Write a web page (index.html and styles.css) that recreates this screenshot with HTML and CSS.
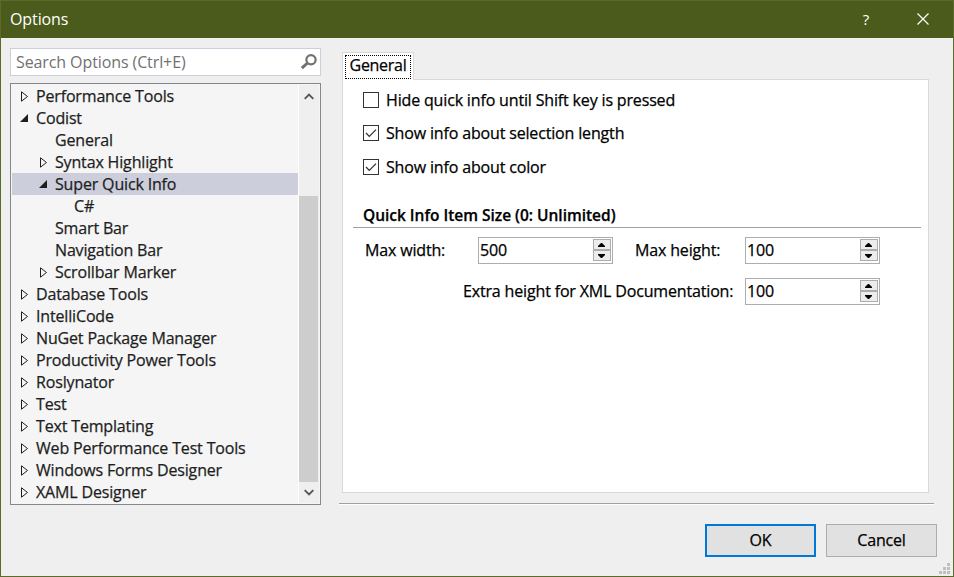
FILE: index.html
```html
<!DOCTYPE html>
<html lang="en">
<head>
<meta charset="utf-8">
<title>Options</title>
<link rel="stylesheet" href="styles.css">
</head>
<body>
<svg width="0" height="0" class="defs">
  <symbol id="closed" viewBox="0 0 8 11"><path d="M1.5 .8v9.4L7.5 5.5z" fill="none" stroke="#1e1e1e"/></symbol>
  <symbol id="open" viewBox="0 0 8 8"><path d="M8 0v8H0z" fill="#1e1e1e"/></symbol>
  <symbol id="check" viewBox="0 0 14 14"><path d="M2 7l3.3 3.4L12 3.6" fill="none" stroke="#333" stroke-width="1.3"/></symbol>
  <symbol id="up" viewBox="0 0 7 4"><path d="M3 0h1l3 3v1H0V3z"/></symbol>
  <symbol id="down" viewBox="0 0 7 4"><path d="M3 4h1l3-3V0H0v1z"/></symbol>
</svg>
<div class="window">
  <header class="titlebar">
    <span class="title">Options</span>
    <span class="help">?</span>
    <svg class="close" width="12" height="12" viewBox="0 0 12 12"><path d="M.5.5l11 11M11.5.5l-11 11" fill="none" stroke="#fff" stroke-width="1.2"/></svg>
  </header>
  <main class="content">
    <aside class="side">
      <div class="search"><span>Search Options (Ctrl+E)</span>
        <svg width="18" height="18" viewBox="0 0 18 18"><circle cx="11" cy="6.7" r="4.6" fill="none" stroke="#717171" stroke-width="2.2"/><path d="M7.5 10L1.8 15.2" fill="none" stroke="#717171" stroke-width="3"/></svg>
      </div>
      <div class="tree">
        <ul class="items">
          <li><svg class="tri"><use href="#closed"/></svg><span>Performance Tools</span></li>
          <li><svg class="tri open"><use href="#open"/></svg><span>Codist</span></li>
          <li class="l2 leaf"><span>General</span></li>
          <li class="l2"><svg class="tri"><use href="#closed"/></svg><span>Syntax Highlight</span></li>
          <li class="l2 selected"><svg class="tri open"><use href="#open"/></svg><span>Super Quick Info</span></li>
          <li class="l3 leaf"><span>C#</span></li>
          <li class="l2 leaf"><span>Smart Bar</span></li>
          <li class="l2 leaf"><span>Navigation Bar</span></li>
          <li class="l2"><svg class="tri"><use href="#closed"/></svg><span>Scrollbar Marker</span></li>
          <li><svg class="tri"><use href="#closed"/></svg><span>Database Tools</span></li>
          <li><svg class="tri"><use href="#closed"/></svg><span>IntelliCode</span></li>
          <li><svg class="tri"><use href="#closed"/></svg><span>NuGet Package Manager</span></li>
          <li><svg class="tri"><use href="#closed"/></svg><span>Productivity Power Tools</span></li>
          <li><svg class="tri"><use href="#closed"/></svg><span>Roslynator</span></li>
          <li><svg class="tri"><use href="#closed"/></svg><span>Test</span></li>
          <li><svg class="tri"><use href="#closed"/></svg><span>Text Templating</span></li>
          <li><svg class="tri"><use href="#closed"/></svg><span>Web Performance Test Tools</span></li>
          <li><svg class="tri"><use href="#closed"/></svg><span>Windows Forms Designer</span></li>
          <li><svg class="tri"><use href="#closed"/></svg><span>XAML Designer</span></li>
        </ul>
        <div class="scrollbar">
          <svg width="10" height="7" viewBox="0 0 10 7"><path d="M.7 5.8L5 1.5l4.3 4.3" fill="none" stroke="#555" stroke-width="1.9"/></svg>
          <div class="thumb"></div>
          <svg width="10" height="7" viewBox="0 0 10 7"><path d="M.7 1.2L5 5.5l4.3-4.3" fill="none" stroke="#555" stroke-width="1.9"/></svg>
        </div>
      </div>
    </aside>
    <section class="page">
      <div class="tab"><span>General</span></div>
      <div class="panel">
        <div class="checks">
          <label><i class="box"></i><span>Hide quick info until Shift key is pressed</span></label>
          <label><i class="box"><svg width="14" height="14"><use href="#check"/></svg></i><span>Show info about selection length</span></label>
          <label><i class="box"><svg width="14" height="14"><use href="#check"/></svg></i><span>Show info about color</span></label>
        </div>
        <h2><span>Quick Info Item Size (0: Unlimited)</span></h2>
        <div class="fields">
          <span class="label">Max width:</span>
          <div class="spin"><span>500</span><div class="arrows"><b><svg width="7" height="4"><use href="#up"/></svg></b><b><svg width="7" height="4"><use href="#down"/></svg></b></div></div>
          <span class="label second">Max height:</span>
          <div class="spin"><span>100</span><div class="arrows"><b><svg width="7" height="4"><use href="#up"/></svg></b><b><svg width="7" height="4"><use href="#down"/></svg></b></div></div>
          <span class="label wide">Extra height for XML Documentation:</span>
          <div class="spin"><span>100</span><div class="arrows"><b><svg width="7" height="4"><use href="#up"/></svg></b><b><svg width="7" height="4"><use href="#down"/></svg></b></div></div>
        </div>
      </div>
      <div class="rule"></div>
    </section>
  </main>
  <footer class="buttons">
    <div class="btn primary">OK</div>
    <div class="btn">Cancel</div>
  </footer>
  <svg class="grip" width="11" height="11" viewBox="0 0 11 11"><path d="M8 0h3v3H8zM4 4h3v3H4zM8 4h3v3H8zM0 8h3v3H0zM4 8h3v3H4zM8 8h3v3H8z" fill="#bfbfbf"/></svg>
</div>
</body>
</html>
```

FILE: styles.css
```css
* { box-sizing: border-box; }
body { margin: 0; font: 400 16px/22px "Open Sans", "Noto Sans", sans-serif; letter-spacing: -0.16px; color: #000; -webkit-text-stroke: 0.25px; overflow: hidden; }
svg { display: block; flex: none; }
.defs { position: absolute; }
.window { position: relative; width: 954px; height: 577px; background: #efefef; border: 1px solid #5a6b2b; display: flex; flex-direction: column; }
.titlebar { height: 37px; flex: none; background: #4b5b1b; color: #fff; display: flex; align-items: center; padding: 0 24px 1px 9px; letter-spacing: -0.1px; -webkit-text-stroke: 0; }
.title { flex: 1; }
.help { margin-right: 48px; font-size: 15px; }
.content { display: flex; height: 468px; padding: 10px 18px 0 9px; gap: 18px; }
.side { width: 311px; display: flex; flex-direction: column; gap: 7px; }
.search { height: 28px; background: #fff; border: 1px solid #ccceda; display: flex; align-items: center; justify-content: space-between; padding: 0 2px 0 5px; color: #717171; letter-spacing: -0.1px; -webkit-text-stroke: 0; }
.tree { height: 422px; border: 1px solid #828790; background: #f5f5f5; padding: 1px; display: flex; color: #1e1e1e; }
.items { list-style: none; margin: 0; padding: 0; width: 286px; }
.items li { height: 22px; display: flex; align-items: center; padding-left: 8px; gap: 8px; white-space: nowrap; }
.items .l2 { padding-left: 27px; }
.items .leaf { padding-left: 43px; }
.items .l3.leaf { padding-left: 62px; }
.items .selected { background: #cccedb; }
.tri { width: 8px; height: 11px; }
.tri.open { height: 8px; }
.scrollbar { width: 21px; border-left: 1px solid #fff; background: #efefef; border-right: 1px solid #efefef; padding: 8px 0 7px; display: flex; flex-direction: column; align-items: center; }
.thumb { width: 19px; height: 286px; margin: 96px 0 7px; background: #cdcdcd; }
.page { width: 595px; padding-top: 4px; }
.tab { position: relative; width: 72px; height: 28px; margin: 0 0 -1px 3px; padding: 2px; border: 1px solid #d9d9d9; border-bottom: 0; background: #fff; }
.tab span { display: block; width: 66px; height: 24px; line-height: 19px; border: 1px dotted #000; text-align: center; letter-spacing: -0.3px; }
.panel { width: 587px; height: 414px; margin-left: 3px; border: 1px solid #d9d9d9; background: #fff; padding: 9px 7px 0 10px; }
.checks { display: flex; flex-direction: column; gap: 11px; padding-left: 10px; }
.checks label { display: flex; align-items: center; gap: 7px; height: 22px; }
.checks label:last-child { margin-top: 1px; }
.box { width: 16px; height: 16px; border: 1px solid #333; }
h2 { margin: 26px 0 0; height: 24px; padding-left: 10px; border-bottom: 1px solid #a0a0a0; font-size: 15.5px; line-height: 23px; font-weight: 600; letter-spacing: -0.02px; }
.fields { display: grid; grid-template-columns: 113px 135px 132px 135px; row-gap: 14px; padding: 9px 0 0 12px; }
.label { line-height: 27px; white-space: nowrap; }
.label.second { padding-left: 22px; }
.label.wide { grid-column: 1 / 4; padding-left: 98px; }
.spin { height: 27px; border: 1px solid #abadb3; display: flex; justify-content: space-between; padding: 1px 1px 2px 1px; line-height: 22px; }
.arrows { width: 18px; display: flex; flex-direction: column; gap: 0; }
.arrows b { flex: 1; border: 1px solid #acacac; background: #ececec; display: flex; align-items: center; justify-content: center; padding-right: 1px; }
.rule { margin-top: 10px; height: 2px; background: #a0a0a0; border-bottom: 1px solid #fff; }
.buttons { display: flex; justify-content: flex-end; gap: 10px; padding: 18px 16px 0 0; }
.btn { width: 111px; height: 33px; background: #e1e1e1; border: 1px solid #adadad; line-height: 31px; text-align: center; }
.btn.primary { border: 2px solid #0078d7; line-height: 29px; }
.grip { position: absolute; right: 3px; bottom: 2px; }
```
